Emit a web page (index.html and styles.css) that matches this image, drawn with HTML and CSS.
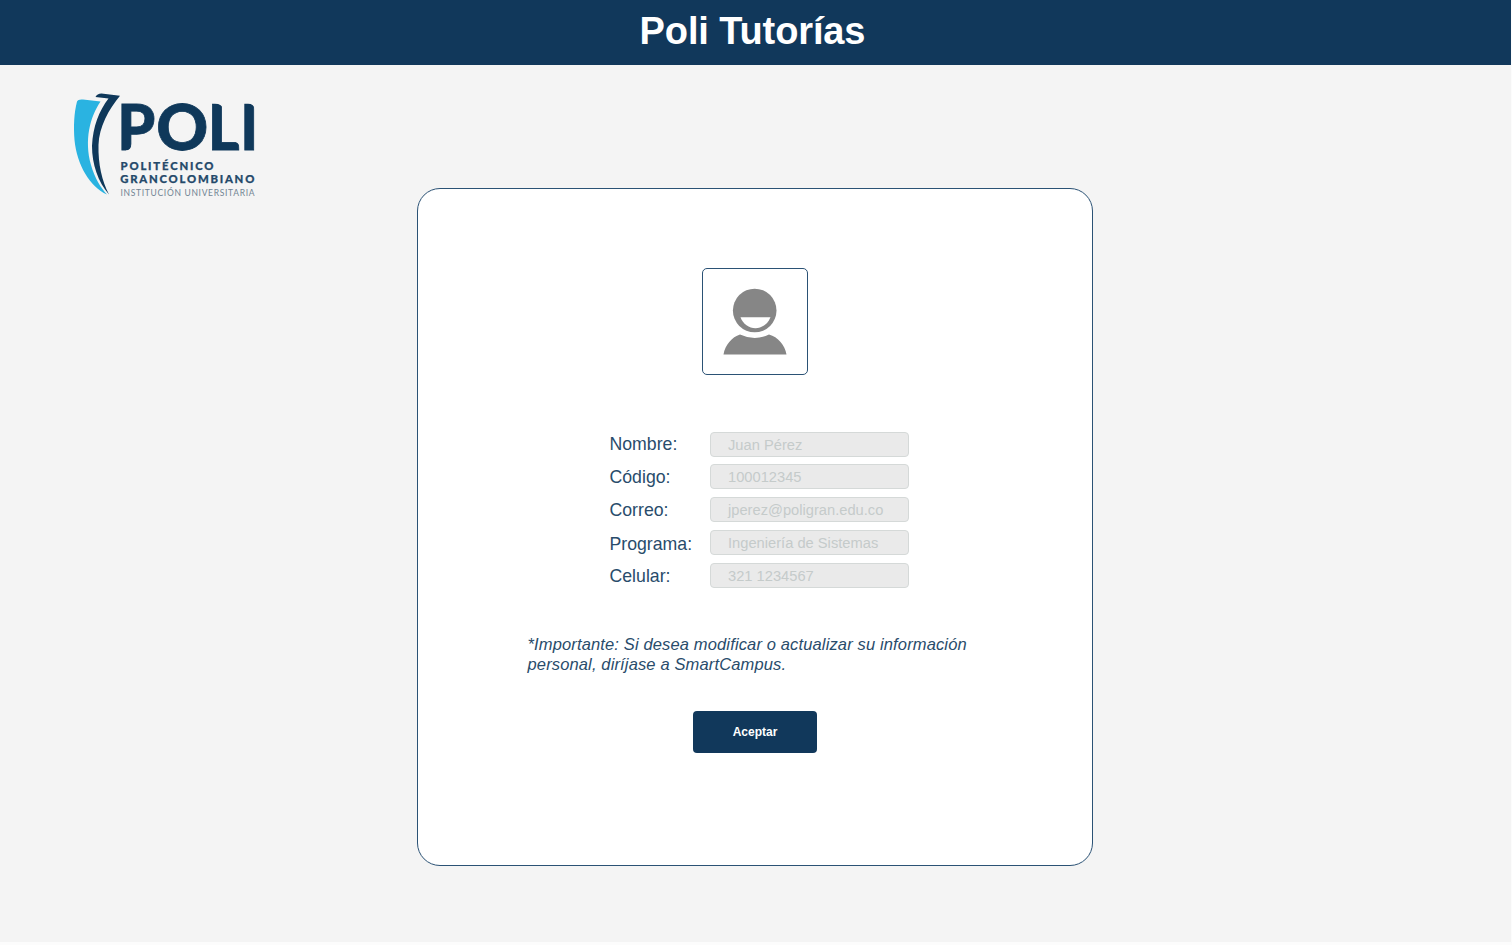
FILE: index.html
```html
<!DOCTYPE html>
<html lang="es">
<head>
<meta charset="utf-8">
<title>Poli Tutorías</title>
<link rel="stylesheet" href="styles.css">
</head>
<body>
<div class="page">
  <header class="topbar"><h1 class="title">Poli Tutorías</h1></header>
  <main class="content">
    <svg class="logo" viewBox="60 80 210 130" role="img" aria-label="Politécnico Grancolombiano">
      <path fill="#2ab3e1" d="M77 101.500Q78 99 83 99.500L100.500 101.500C90 117 84 140 91 165C95 179 101 188 107 194.500C90 187 77 165 74.500 140C73.500 126 74 113 77 101.500Z"/>
      <path fill="#0f385a" d="M95.500 97Q97 93.500 101.500 93.500L120 95.800C109 109 99 127 98.500 145C98 164 102 181 109 194.500C98 182 92 164 92 146C93 126 99 111 108.500 98.500Z"/>
      <g class="logo-name">
        <text x="117.300" y="149.800" textLength="38" lengthAdjust="spacingAndGlyphs">P</text>
        <text x="156.200" y="149.800" textLength="52" lengthAdjust="spacingAndGlyphs">O</text>
        <text x="207.800" y="149.800" textLength="32" lengthAdjust="spacingAndGlyphs">L</text>
        <text x="240.200" y="149.800" textLength="18" lengthAdjust="spacingAndGlyphs">I</text>
      </g>
      <g class="logo-cut">
        <path d="M132.500 144.500V152H126V150.500Q131 150 131.500 144.500Z"/>
        <path d="M211 101H223.500V109.500Q222 104 215 103.500H211Z"/>
        <path d="M232 140H241V148.500H240Q239.500 141.500 232 141.300Z"/>
        <path d="M243 101H256V109.500H255Q254 104 248 103.500H243Z"/>
      </g>
      <text class="logo-line" x="120.500" y="169.500" textLength="93">POLITÉCNICO</text>
      <text class="logo-line" x="120.300" y="183" textLength="134">GRANCOLOMBIANO</text>
      <text class="logo-sub" x="120.500" y="195.500" textLength="134">INSTITUCIÓN UNIVERSITARIA</text>
    </svg>
    <section class="card">
      <div class="avatar">
        <svg class="avatar-icon" viewBox="690 260 130 125">
          <circle cx="754.700" cy="310.500" r="21.800"/>
          <path d="M723.500 354.500C725 345 732 337 740 334.500Q755 341.500 769 334.500C778 337 785 345 786.500 354.500Z"/>
          <path class="smile" d="M740.500 317.300H770.500C768 324 762 328.200 755.500 328.200C749 328.200 743 324 740.500 317.300Z"/>
        </svg>
      </div>
      <div class="fields">
        <span class="label">Nombre:</span><div class="value">Juan Pérez</div>
        <span class="label label-low">Código:</span><div class="value">100012345</div>
        <span class="label label-low">Correo:</span><div class="value">jperez@poligran.edu.co</div>
        <span class="label label-lowest">Programa:</span><div class="value">Ingeniería de Sistemas</div>
        <span class="label label-low">Celular:</span><div class="value">321 1234567</div>
      </div>
      <p class="note">*Importante: Si desea modificar o actualizar su información<br>personal, diríjase a SmartCampus.</p>
      <button class="accept" type="button">Aceptar</button>
    </section>
  </main>
</div>
</body>
</html>
```
FILE: styles.css
```css
* { box-sizing: border-box; }
body {
  margin: 0;
  background: #fcfcfc;
  font-family: "Liberation Sans", Arial, sans-serif;
  color: #294c6b;
}
.page { width: 1511px; height: 942px; background: #f4f4f4; }
.topbar {
  height: 65px;
  padding: 9px 6px 0 0;
  background: #11385b;
  color: #fff;
  text-align: center;
}
.title { margin: 0; font-size: 38px; letter-spacing: -.12px; line-height: 44px; }
.content { display: grid; grid-template-columns: 357px 676px; align-items: start; padding-left: 60px; }
.logo { width: 210px; height: 130px; margin-top: 15px; }
.logo-name { font: 900 63px Lato, sans-serif; fill: #0f385a; stroke: #0f385a; stroke-width: .8px; }
.logo-cut { fill: #f4f4f4; }
.logo-line { font: 900 11.300px Lato, sans-serif; fill: #24496a; stroke: #24496a; stroke-width: .25px; }
.logo-sub { font: 400 8.500px Lato, sans-serif; fill: #718493; }
.card {
  display: flex;
  flex-direction: column;
  width: 676px;
  height: 678px;
  margin-top: 123px;
  border: 1px solid #2b5275;
  border-radius: 23px;
  background: #fff;
}
.avatar {
  width: 106px;
  height: 107px;
  margin: 79px 0 0 284px;
  border: 1px solid #2b5275;
  border-radius: 5px;
  overflow: hidden;
}
.avatar-icon { display: block; width: 130px; height: 125px; margin: -9px 0 0 -13px; fill: #868686; }
.smile { fill: #fff; }
.fields {
  display: grid;
  grid-template-columns: 100px 199px;
  grid-template-rows: 32px 33px 33px 33px 25px;
  margin: 57px 0 0 192px;
}
.label { margin-left: -.5px; font-size: 17.700px; line-height: 25px; }
.label-low { padding-top: 1px; }
.label-lowest { padding-top: 2px; }
.value {
  height: 25px;
  padding-left: 17px;
  border: 1px solid #d5d9d8;
  border-radius: 4px;
  background: #eaeaea;
  color: #c5cbca;
  font-size: 14.700px;
  line-height: 24px;
}
.note { margin: 46px 0 0 109.500px; font-size: 16.500px; letter-spacing: .14px; line-height: 20px; font-style: italic; white-space: nowrap; }
.accept {
  width: 124px;
  height: 42px;
  margin: 37px 0 0 275px;
  padding: 0;
  border: 0;
  border-radius: 4px;
  background: #11385b;
  color: #fff;
  font: bold 12px "Liberation Sans", Arial, sans-serif;
}
```
